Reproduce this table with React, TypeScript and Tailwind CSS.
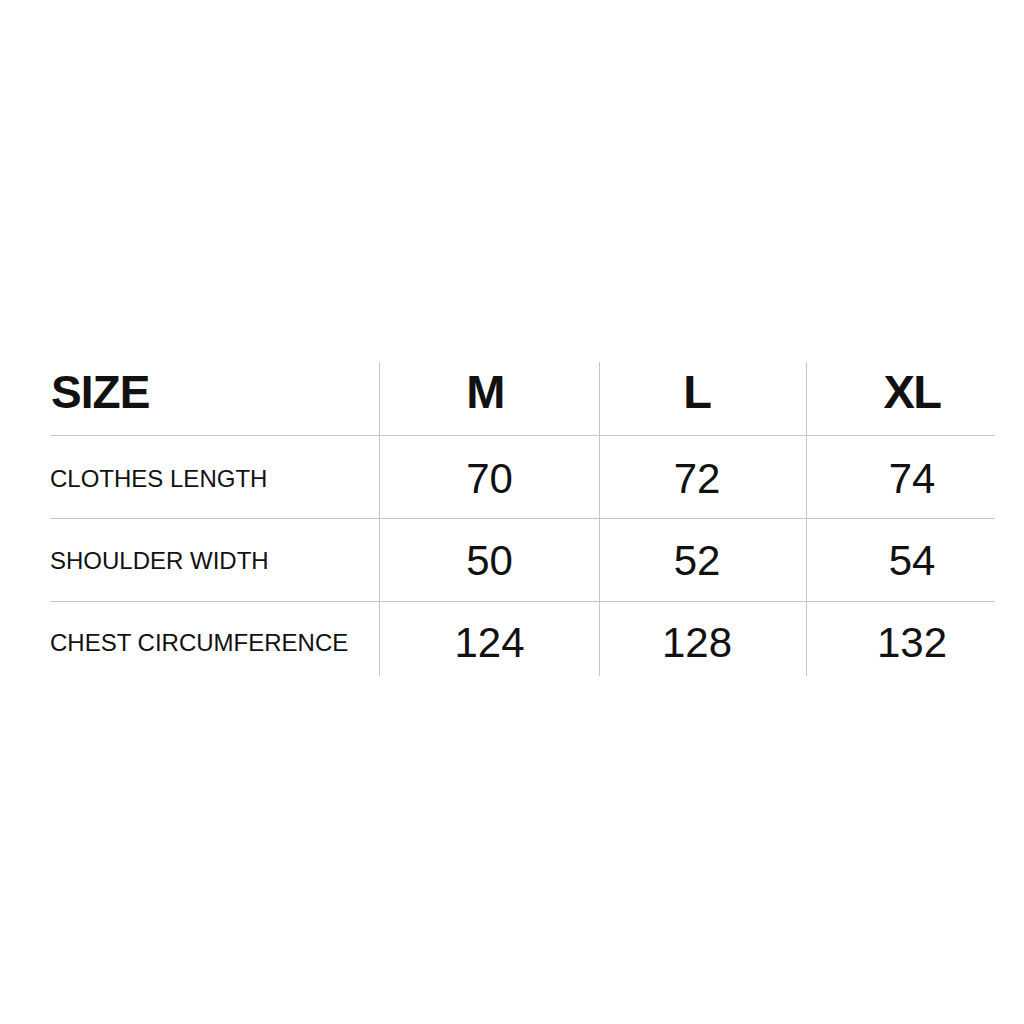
import React from "react";

const rows = [
  { label: "CLOTHES LENGTH", vals: ["70", "72", "74"], h: "h-[83px]", pt: "pt-[3px]" },
  { label: "SHOULDER WIDTH", vals: ["50", "52", "54"], h: "h-[83px]", pt: "pt-[2px]" },
  { label: "CHEST CIRCUMFERENCE", vals: ["124", "128", "132"], h: "h-[74px]", pt: "pt-[7px]" },
];

const colPad = ["", "pr-[12px]", "pl-[22px]"];
const headPad = ["pr-[9px]", "pr-[12px]", "pl-[22px]"];

export default function App() {
  return (
    <div
      className="w-[1024px] h-[1024px] bg-white text-[#111]"
      style={{ fontFamily: '"Liberation Sans", Arial, sans-serif' }}
    >
      <div className="pt-[362px] pl-[50px]">
        <div className="grid grid-cols-[329px_220px_207px_189px]">
          {/* header */}
          <div className="h-[74px] border-b border-[#c6c6c6] flex items-center pl-[1px] pb-[14px] text-[46px] font-bold leading-none tracking-[-0.02em]">
            SIZE
          </div>
          {["M", "L", "XL"].map((s, i) => (
            <div
              key={s}
              className={`h-[74px] border-b border-l border-[#c6c6c6] flex items-center justify-center pb-[14px] text-[47px] font-bold leading-none tracking-[-0.03em] ${headPad[i]}`}
            >
              {s}
            </div>
          ))}
          {rows.map((r, ri) => (
            <React.Fragment key={r.label}>
              <div
                className={`${r.h} ${ri < rows.length - 1 ? "border-b" : ""} border-[#c6c6c6] flex items-center ${r.pt} text-[24px] leading-none`}
              >
                {r.label}
              </div>
              {r.vals.map((v, i) => (
                <div
                  key={v}
                  className={`${r.h} ${ri < rows.length - 1 ? "border-b" : ""} border-l border-[#c6c6c6] flex items-center justify-center ${r.pt} text-[42px] leading-none ${colPad[i]}`}
                >
                  {v}
                </div>
              ))}
            </React.Fragment>
          ))}
        </div>
      </div>
    </div>
  );
}
